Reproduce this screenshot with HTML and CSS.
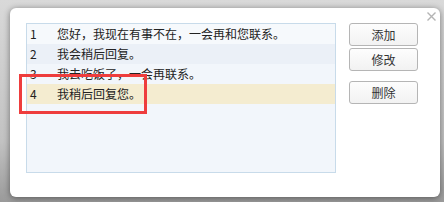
FILE: index.html
```html
<!DOCTYPE html>
<html lang="zh-CN">
<head>
    <meta charset="UTF-8">
    <meta name="viewport" content="width=device-width, initial-scale=1.0">
    <title>快捷回复</title>
    <link rel="stylesheet" href="styles.css">
</head>
<body>
    <div class="dialog">
        <svg class="close" width="9" height="9" viewBox="0 0 9 9">
            <path d="M0.5 0.5 L8.5 8.5 M8.5 0.5 L0.5 8.5" stroke="#b4b4b4" stroke-width="1.4" fill="none"/>
        </svg>
        <div class="content">
            <div class="list">
                <div class="row"><span class="num">1</span><span class="text">您好，我现在有事不在，一会再和您联系。</span></div>
                <div class="row"><span class="num">2</span><span class="text">我会稍后回复。</span></div>
                <div class="row"><span class="num">3</span><span class="text">我去吃饭了，一会再联系。</span></div>
                <div class="row selected"><span class="num">4</span><span class="text">我稍后回复您。</span></div>
            </div>
            <div class="buttons">
                <button class="btn">添加</button>
                <button class="btn">修改</button>
                <button class="btn spaced">删除</button>
            </div>
        </div>
        <div class="mark"></div>
    </div>
</body>
</html>
```

FILE: styles.css
```css
html, body {
    margin: 0;
    height: 100%;
}
body {
    font-family: "Noto Sans CJK SC", "Microsoft YaHei", sans-serif;
    font-size: 12px;
    color: #222;
    background: linear-gradient(to bottom, #d9d9d9 0%, #c2c2c2 70%, #9a9a9a 100%);
    padding: 8px 4px 0 10px;
    box-sizing: border-box;
    overflow: hidden;
}
.dialog {
    position: relative;
    width: 430px;
    height: 189px;
    background: #fff;
    border-radius: 6px;
    box-shadow: 0 1px 6px rgba(0,0,0,0.45);
    box-sizing: border-box;
}
.close {
    position: absolute;
    top: 4px;
    right: 4px;
}
.content {
    display: flex;
    padding: 15px 0 0 16px;
}
.list {
    width: 310px;
    height: 150px;
    border: 1px solid #c8dbea;
    background: #f2f6fb;
    box-sizing: border-box;
}
.row {
    display: flex;
    height: 20px;
    line-height: 20px;
}
.row:nth-child(1) {
    background: #f6f9fc;
}
.row:nth-child(2) {
    background: #ebf0f7;
}
.row.selected {
    background: #f4ecd0;
}
.num {
    width: 27px;
    padding-left: 3px;
}
.buttons {
    display: flex;
    flex-direction: column;
    gap: 2px;
    margin-left: 13px;
}
.btn {
    width: 69px;
    height: 23px;
    border: 1px solid #b5b5b5;
    border-radius: 3px;
    background: linear-gradient(#fdfdfd, #f2f2f2);
    font-family: inherit;
    font-size: 12px;
    color: #333;
    padding: 0;
}
.btn.spaced {
    margin-top: 8px;
}
.mark {
    position: absolute;
    left: 9px;
    top: 66px;
    width: 128px;
    height: 40px;
    border: 3px solid #ee3d3d;
    box-sizing: border-box;
}
```
